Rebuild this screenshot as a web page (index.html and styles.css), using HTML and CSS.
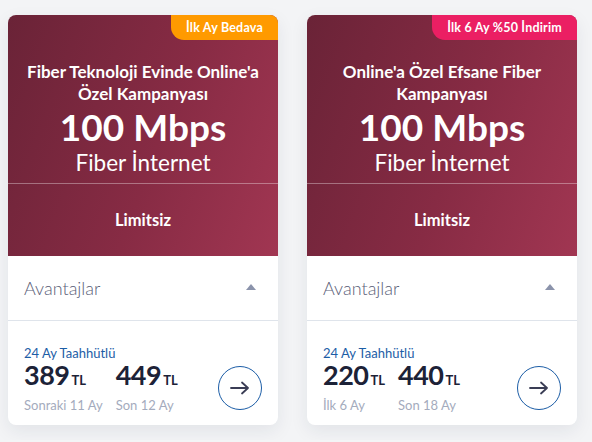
FILE: index.html
```html
<!DOCTYPE html>
<html lang="tr">
<head>
<meta charset="utf-8">
<link rel="stylesheet" href="styles.css">
</head>
<body>
<div class="cards">
  <div class="card">
    <div class="head">
      <span class="badge badge-orange">İlk Ay Bedava</span>
      <div class="head-top">
        <div class="title">Fiber Teknoloji Evinde Online'a<br>Özel Kampanyası</div>
        <div class="speed">100 Mbps</div>
        <div class="kind">Fiber İnternet</div>
      </div>
      <div class="head-bottom">Limitsiz</div>
    </div>
    <div class="adv">
      <span>Avantajlar</span>
      <span class="tri"></span>
    </div>
    <div class="foot">
      <div class="prices">
        <div class="term">24 Ay Taahhütlü</div>
        <div class="cols">
          <div class="col">
            <div class="amount">389<span class="cur">TL</span></div>
            <div class="sub">Sonraki 11 Ay</div>
          </div>
          <div class="col">
            <div class="amount">449<span class="cur">TL</span></div>
            <div class="sub">Son 12 Ay</div>
          </div>
        </div>
      </div>
      <div class="go">
        <svg width="20" height="14" viewBox="0 0 20 14"><path d="M1 7H18M12 1.5L18 7L12 12.5" fill="none" stroke="#3a3d55" stroke-width="1.8" stroke-linecap="round" stroke-linejoin="round"/></svg>
      </div>
    </div>
  </div>

  <div class="card">
    <div class="head">
      <span class="badge badge-pink">İlk 6 Ay %50 İndirim</span>
      <div class="head-top">
        <div class="title">Online'a Özel Efsane Fiber<br>Kampanyası</div>
        <div class="speed">100 Mbps</div>
        <div class="kind">Fiber İnternet</div>
      </div>
      <div class="head-bottom">Limitsiz</div>
    </div>
    <div class="adv">
      <span>Avantajlar</span>
      <span class="tri"></span>
    </div>
    <div class="foot">
      <div class="prices">
        <div class="term">24 Ay Taahhütlü</div>
        <div class="cols">
          <div class="col">
            <div class="amount">220<span class="cur">TL</span></div>
            <div class="sub">İlk 6 Ay</div>
          </div>
          <div class="col">
            <div class="amount">440<span class="cur">TL</span></div>
            <div class="sub">Son 18 Ay</div>
          </div>
        </div>
      </div>
      <div class="go">
        <svg width="20" height="14" viewBox="0 0 20 14"><path d="M1 7H18M12 1.5L18 7L12 12.5" fill="none" stroke="#3a3d55" stroke-width="1.8" stroke-linecap="round" stroke-linejoin="round"/></svg>
      </div>
    </div>
  </div>
</div>
</body>
</html>
```
FILE: styles.css
```css
* { box-sizing: border-box; }
html, body { margin: 0; }
body {
  background: #f3f4f6;
  font-family: "Lato", "Noto Sans", sans-serif;
  padding: 15px 8px;
}
.cards {
  display: flex;
  gap: 29px;
}
.card {
  width: 270px;
  background: #fff;
  border-radius: 8px;
  overflow: hidden;
  box-shadow: 0 6px 18px rgba(30, 40, 70, 0.08);
}
.head {
  position: relative;
  background: linear-gradient(110deg, #6a2337 0%, #872b44 55%, #a13652 100%);
  color: #fff;
  text-align: center;
}
.badge {
  position: absolute;
  top: 0;
  right: 0;
  height: 25px;
  line-height: 25px;
  padding: 0 15px 0 15px;
  font-size: 12.5px;
  font-weight: 700;
  color: #fff;
  border-bottom-left-radius: 13px;
  letter-spacing: 0.2px;
}
.badge-orange { background: #ff9a00; }
.badge-pink { background: #eb1f63; }
.head-top {
  height: 169px;
  padding: 46px 4px 0;
  border-bottom: 1px solid rgba(255, 255, 255, 0.35);
}
.title {
  font-size: 17px;
  font-weight: 700;
  line-height: 22px;
}
.speed {
  font-size: 37px;
  font-weight: 700;
  line-height: 38px;
  margin-top: 3px;
}
.kind {
  font-size: 22.5px;
  line-height: 26px;
  font-weight: 400;
  margin-top: 4px;
}
.head-bottom {
  height: 72px;
  display: flex;
  align-items: center;
  justify-content: center;
  font-size: 16.5px;
  font-weight: 700;
}
.adv {
  height: 65px;
  border-bottom: 1px solid #dfe4eb;
  display: flex;
  align-items: center;
  justify-content: space-between;
  padding: 0 22px 0 16px;
  font-size: 18px;
  font-weight: 300;
  color: #5a6078;
}
.tri {
  width: 0;
  height: 0;
  border-left: 5.5px solid transparent;
  border-right: 5.5px solid transparent;
  border-bottom: 6px solid #8b93ab;
  margin-top: -3px;
}
.foot {
  height: 104px;
  display: flex;
  align-items: center;
  justify-content: space-between;
  padding: 13px 16px 0 16px;
}
.term {
  font-size: 13px;
  color: #1c5da6;
  line-height: 16px;
}
.cols {
  display: flex;
  gap: 13px;
}
.amount {
  font-size: 27px;
  font-weight: 700;
  color: #1c2237;
  line-height: 27px;
  letter-spacing: -0.5px;
}
.cur {
  font-size: 13px;
  margin-left: 2px;
  letter-spacing: 0;
}
.sub {
  font-size: 13px;
  color: #a4abbd;
  line-height: 18px;
  margin-top: 2px;
}
.go {
  width: 44px;
  height: 44px;
  border: 1.5px solid #1c5da6;
  border-radius: 50%;
  display: flex;
  align-items: center;
  justify-content: center;
  margin-top: 16px;
}
```
